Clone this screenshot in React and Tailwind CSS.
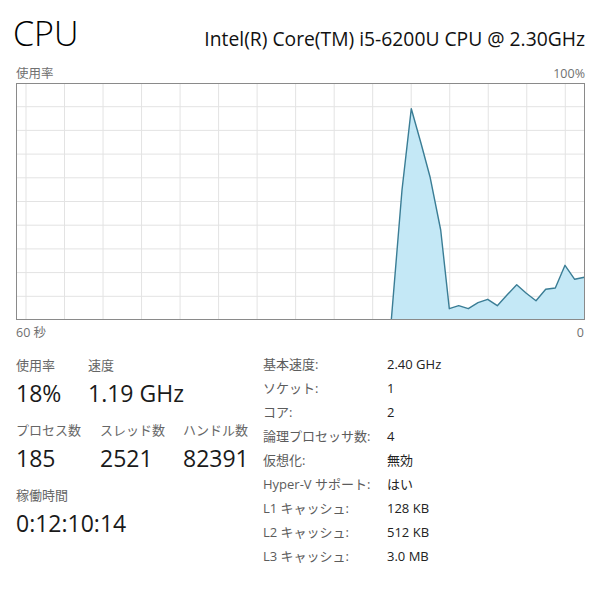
import React from "react";

const FONT = { fontFamily: '"Open Sans", "Noto Sans CJK JP", sans-serif' };

// Chart geometry (pixels inside the 569x237 graph box)
const W = 569;
const H = 237;
const V_LINES = Array.from({ length: 15 }, (_, k) => 10 + k * 38.52);
const H_LINES = Array.from({ length: 9 }, (_, k) => (k + 1) * 23.7);

const SAMPLES = [
  [375.3, 237],
  [386, 107],
  [395.3, 25.7],
  [405, 60.3],
  [414, 93.7],
  [424.7, 147],
  [433.3, 225.7],
  [442.7, 222.7],
  [452.3, 225.7],
  [462, 219.7],
  [471.7, 216.3],
  [481.3, 222.7],
  [491, 212],
  [500.7, 201.7],
  [510.3, 210.3],
  [520, 217.7],
  [529.7, 206.3],
  [539.3, 205],
  [549, 182.3],
  [558.7, 196.3],
  [568.3, 194.3],
];

function UsageGraph() {
  const line = SAMPLES.map(([x, y]) => `${x},${y}`).join(" ");
  const area = `${line} 568.3,237 375.3,237`;
  return (
    <svg width={W} height={H} viewBox={`0 0 ${W} ${H}`} className="block">
      <rect x="0" y="0" width={W} height={H} fill="#ffffff" />
      {V_LINES.map((x) => (
        <line key={`v${x}`} x1={x} y1="0" x2={x} y2={H} stroke="#e3e3e3" strokeWidth="1" />
      ))}
      {H_LINES.map((y) => (
        <line key={`h${y}`} x1="0" y1={y} x2={W} y2={y} stroke="#e3e3e3" strokeWidth="1" />
      ))}
      <polygon points={area} fill="#c4e8f6" />
      <polyline points={line} fill="none" stroke="#3a7d95" strokeWidth="1.4" strokeLinejoin="round" />
      <rect x="0.5" y="0.5" width={W - 1} height={H - 1} fill="none" stroke="#8a8a8a" strokeWidth="1" />
    </svg>
  );
}

function Stat({ label, value, width }) {
  return (
    <div className={width}>
      <div className="text-[13px] leading-[20px] text-[#666666]">{label}</div>
      <div className="mt-[3px] text-[23px] leading-[30px] text-[#1a1a1a]">{value}</div>
    </div>
  );
}

const SPECS = [
  ["基本速度:", "2.40 GHz"],
  ["ソケット:", "1"],
  ["コア:", "2"],
  ["論理プロセッサ数:", "4"],
  ["仮想化:", "無効"],
  ["Hyper-V サポート:", "はい"],
  ["L1 キャッシュ:", "128 KB"],
  ["L2 キャッシュ:", "512 KB"],
  ["L3 キャッシュ:", "3.0 MB"],
];

export default function App() {
  return (
    <div className="w-[612px] h-[594px] bg-white overflow-hidden" style={FONT}>
      <div className="ml-[16px] w-[569px]">
        {/* Title row */}
        <div className="pt-[16px] flex items-baseline justify-between">
          <div className="-ml-[3px] text-[34px] leading-[34px] font-light text-black">CPU</div>
          <div className="text-[19.3px] leading-[34px] text-[#111111]">
            Intel(R) Core(TM) i5-6200U CPU @ 2.30GHz
          </div>
        </div>

        {/* Graph caption */}
        <div className="mt-[10px] flex justify-between text-[12.5px] leading-[16px] text-[#707070]">
          <span>使用率</span>
          <span>100%</span>
        </div>

        <div className="mt-[1px]">
          <UsageGraph />
        </div>

        <div className="mt-[5px] flex justify-between text-[12.5px] leading-[16px] text-[#707070]">
          <span>60 秒</span>
          <span className="pr-[1px]">0</span>
        </div>

        {/* Statistics */}
        <div className="mt-[12px] flex">
          <div className="w-[247px] pt-[2px] flex flex-col gap-[12px]">
            <div className="flex">
              <Stat label="使用率" value="18%" width="w-[72px]" />
              <Stat label="速度" value="1.19 GHz" width="w-[120px]" />
            </div>
            <div className="flex">
              <Stat label="プロセス数" value="185" width="w-[84px]" />
              <Stat label="スレッド数" value="2521" width="w-[83px]" />
              <Stat label="ハンドル数" value="82391" width="w-[80px]" />
            </div>
            <Stat label="稼働時間" value="0:12:10:14" width="w-[200px]" />
          </div>

          <div className="grid grid-cols-[124px_auto] auto-rows-[24px] items-center text-[13px]">
            {SPECS.map(([k, v]) => (
              <React.Fragment key={k}>
                <span className="text-[#5c5c5c]">{k}</span>
                <span className="text-[#222222]">{v}</span>
              </React.Fragment>
            ))}
          </div>
        </div>
      </div>
    </div>
  );
}
